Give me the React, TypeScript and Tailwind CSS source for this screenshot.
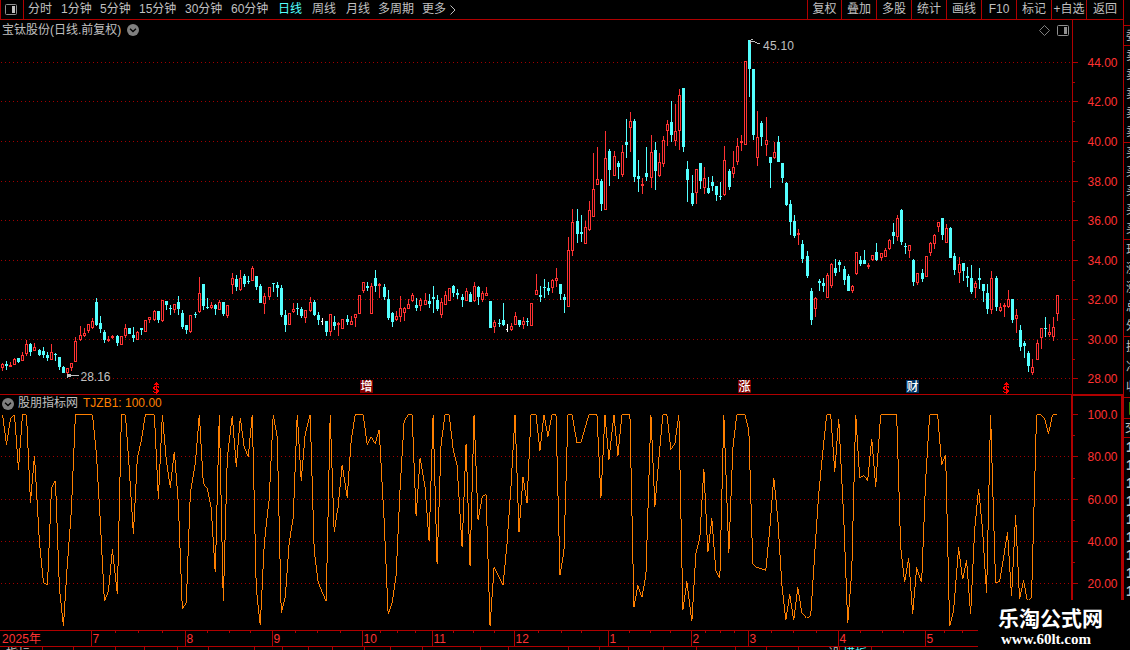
type Kind = "R" | "C" | "W";
type Candle = [Kind, number, number, number, number];

const COLORS = { R: "#ff3232", C: "#54ffff", W: "#ffffff" } as const;
const LINE = "#b00000";

// kind, high, body top, body bottom, low
const CANDLES: Candle[] = [
  ["R", 363, 364, 368, 371], ["C", 361, 364, 366, 370], ["R", 362, 365, 367, 367], ["R", 358, 359, 365, 365], ["C", 358, 358, 362, 363],
  ["R", 352, 355, 361, 361], ["R", 340, 344, 354, 356], ["C", 343, 344, 352, 356], ["R", 343, 347, 351, 351], ["C", 349, 350, 355, 356],
  ["C", 347, 351, 355, 358], ["C", 352, 355, 358, 361], ["R", 344, 352, 360, 360], ["C", 353, 354, 355, 361], ["C", 357, 357, 367, 370],
  ["C", 366, 367, 373, 373], ["R", 368, 368, 373, 375], ["R", 363, 363, 368, 371], ["R", 337, 341, 362, 362], ["R", 326, 335, 340, 341],
  ["R", 328, 333, 336, 337], ["R", 324, 324, 331, 333], ["R", 318, 321, 328, 329], ["C", 298, 302, 325, 326], ["C", 316, 323, 329, 333],
  ["C", 330, 332, 340, 343], ["R", 336, 339, 341, 342], ["R", 335, 336, 338, 339], ["C", 335, 336, 343, 346], ["R", 336, 336, 345, 345],
  ["R", 324, 328, 336, 338], ["C", 328, 328, 334, 334], ["C", 327, 335, 338, 342], ["R", 331, 332, 340, 340], ["C", 328, 328, 330, 335],
  ["R", 320, 320, 332, 332], ["R", 317, 317, 320, 323], ["R", 310, 311, 320, 321], ["C", 311, 311, 320, 323], ["R", 300, 300, 321, 322],
  ["C", 301, 301, 305, 310], ["C", 305, 308, 309, 315], ["R", 304, 304, 310, 313], ["C", 296, 302, 309, 315], ["C", 310, 313, 327, 329],
  ["C", 325, 325, 330, 334], ["R", 315, 315, 332, 333], ["C", 312, 314, 315, 318], ["R", 277, 293, 312, 313], ["C", 284, 284, 306, 310],
  ["C", 298, 307, 308, 309], ["R", 302, 305, 308, 309], ["C", 304, 305, 309, 315], ["R", 300, 302, 310, 310], ["C", 302, 302, 314, 316],
  ["R", 305, 305, 316, 318], ["R", 273, 278, 285, 294], ["C", 275, 279, 287, 291], ["R", 270, 278, 290, 291], ["C", 274, 276, 284, 287],
  ["C", 276, 281, 282, 284], ["R", 266, 268, 281, 281], ["C", 276, 276, 287, 290], ["C", 284, 286, 303, 303], ["R", 293, 296, 304, 314],
  ["R", 287, 287, 297, 300], ["C", 283, 283, 284, 292], ["C", 282, 285, 288, 297], ["C", 285, 288, 315, 317], ["C", 310, 315, 325, 332],
  ["R", 313, 313, 325, 325], ["R", 303, 309, 312, 313], ["C", 303, 308, 309, 315], ["C", 307, 309, 316, 318], ["R", 310, 310, 318, 323],
  ["R", 297, 302, 311, 312], ["C", 300, 302, 315, 316], ["C", 312, 315, 320, 325], ["W", 318, 321, 322, 325], ["C", 321, 321, 332, 336],
  ["R", 314, 314, 332, 336], ["C", 316, 322, 326, 330], ["R", 322, 323, 325, 336], ["R", 319, 319, 329, 329], ["C", 315, 319, 322, 325],
  ["R", 316, 321, 325, 325], ["R", 314, 314, 318, 327], ["R", 295, 295, 314, 314], ["R", 282, 282, 291, 293], ["C", 282, 286, 288, 291],
  ["R", 283, 286, 314, 314], ["C", 270, 278, 286, 292], ["R", 283, 284, 286, 298], ["C", 284, 287, 297, 300], ["C", 290, 299, 318, 320],
  ["C", 312, 313, 322, 327], ["R", 311, 316, 320, 321], ["R", 296, 308, 317, 322], ["R", 307, 308, 313, 321], ["R", 299, 304, 309, 309],
  ["R", 293, 295, 301, 302], ["C", 298, 305, 308, 311], ["R", 298, 300, 306, 311], ["R", 293, 300, 305, 305], ["C", 294, 301, 304, 308],
  ["C", 286, 297, 299, 313], ["C", 295, 300, 309, 311], ["R", 298, 302, 315, 318], ["R", 291, 295, 305, 305], ["R", 288, 288, 301, 301],
  ["C", 285, 286, 293, 297], ["C", 289, 293, 295, 299], ["C", 294, 297, 300, 307], ["R", 288, 291, 301, 301], ["C", 292, 294, 302, 302],
  ["R", 282, 286, 301, 302], ["C", 286, 287, 297, 305], ["R", 291, 293, 300, 302], ["R", 287, 293, 296, 296], ["C", 301, 301, 328, 328],
  ["R", 320, 322, 327, 333], ["C", 319, 323, 324, 327], ["C", 303, 320, 325, 326], ["W", 324, 329, 330, 332], ["R", 323, 326, 330, 331],
  ["R", 312, 316, 325, 325], ["C", 320, 320, 325, 327], ["R", 317, 321, 325, 329], ["C", 318, 321, 322, 326], ["R", 303, 303, 326, 326],
  ["R", 274, 290, 295, 295], ["C", 286, 295, 297, 302], ["C", 279, 287, 288, 298], ["C", 282, 288, 291, 295], ["R", 279, 280, 288, 293],
  ["R", 268, 278, 281, 287], ["C", 284, 284, 294, 300], ["C", 294, 297, 300, 313], ["R", 237, 250, 307, 307], ["R", 209, 222, 251, 256],
  ["C", 209, 221, 234, 243], ["C", 215, 232, 234, 242], ["R", 221, 227, 244, 244], ["R", 201, 210, 230, 231], ["R", 153, 189, 217, 217],
  ["R", 147, 179, 185, 185], ["C", 179, 181, 204, 211], ["R", 131, 158, 210, 210], ["C", 149, 151, 170, 186], ["R", 151, 156, 176, 176],
  ["C", 161, 163, 167, 179], ["R", 145, 152, 175, 177], ["C", 119, 142, 145, 158], ["R", 112, 121, 128, 152], ["C", 119, 121, 177, 182],
  ["C", 160, 176, 179, 192], ["R", 178, 184, 186, 194], ["C", 147, 173, 177, 181], ["R", 135, 152, 178, 188], ["C", 142, 150, 171, 190],
  ["R", 153, 162, 176, 177], ["R", 136, 140, 164, 167], ["R", 120, 124, 131, 146], ["C", 101, 122, 135, 142], ["R", 104, 131, 141, 146],
  ["R", 89, 95, 131, 150], ["C", 88, 88, 147, 152], ["C", 161, 169, 180, 202], ["C", 175, 193, 204, 206], ["R", 169, 169, 193, 204],
  ["C", 163, 163, 181, 189], ["R", 167, 178, 188, 194], ["C", 177, 188, 193, 194], ["C", 176, 182, 186, 191], ["C", 186, 186, 195, 201],
  ["C", 182, 196, 197, 200], ["R", 146, 160, 195, 196], ["C", 169, 171, 187, 190], ["R", 151, 167, 174, 178], ["R", 138, 146, 162, 165],
  ["R", 135, 141, 143, 151], ["R", 61, 61, 145, 145], ["C", 40, 40, 69, 97], ["C", 69, 69, 135, 140], ["R", 111, 137, 158, 166],
  ["C", 121, 123, 137, 146], ["R", 117, 140, 145, 156], ["C", 157, 157, 163, 188], ["R", 142, 152, 158, 159], ["C", 136, 142, 162, 162],
  ["C", 163, 163, 178, 183], ["C", 182, 183, 205, 206], ["C", 200, 204, 222, 235], ["C", 215, 221, 236, 238], ["R", 229, 233, 235, 245],
  ["C", 240, 244, 259, 263], ["C", 251, 256, 276, 278], ["C", 288, 291, 320, 325], ["R", 297, 298, 309, 317], ["C", 279, 281, 283, 291],
  ["C", 278, 283, 286, 292], ["R", 273, 275, 298, 298], ["R", 263, 264, 286, 288], ["C", 259, 268, 273, 276], ["C", 260, 262, 265, 272],
  ["C", 266, 269, 280, 285], ["C", 274, 276, 291, 291], ["R", 285, 286, 291, 293], ["R", 252, 252, 274, 275], ["C", 256, 260, 264, 266],
  ["C", 250, 260, 264, 264], ["R", 263, 265, 267, 269], ["R", 255, 255, 260, 261], ["C", 243, 252, 260, 261], ["R", 253, 253, 258, 261],
  ["R", 248, 250, 257, 257], ["R", 239, 240, 249, 250], ["C", 223, 232, 236, 244], ["R", 215, 218, 237, 241], ["C", 209, 210, 242, 245],
  ["C", 243, 246, 247, 254], ["R", 245, 245, 251, 258], ["C", 259, 260, 282, 286], ["R", 273, 273, 283, 285], ["C", 269, 273, 279, 282],
  ["R", 256, 256, 277, 277], ["R", 242, 243, 253, 256], ["R", 234, 235, 244, 249], ["R", 222, 222, 227, 232], ["C", 218, 218, 235, 240],
  ["R", 224, 228, 243, 243], ["C", 227, 228, 258, 258], ["C", 253, 256, 270, 275], ["R", 257, 264, 273, 283], ["C", 263, 263, 271, 281],
  ["C", 267, 276, 278, 287], ["C", 265, 278, 292, 294], ["R", 281, 283, 288, 298], ["C", 268, 278, 280, 289], ["C", 284, 284, 291, 302],
  ["C", 284, 293, 309, 314], ["R", 271, 278, 310, 314], ["C", 276, 278, 307, 311], ["R", 303, 307, 311, 312], ["R", 303, 305, 307, 317],
  ["R", 290, 299, 307, 308], ["C", 299, 299, 320, 323], ["R", 309, 315, 319, 333], ["C", 325, 330, 347, 351], ["C", 341, 343, 346, 358],
  ["C", 351, 353, 366, 372], ["R", 359, 367, 373, 375], ["R", 340, 343, 360, 360], ["R", 328, 328, 338, 349], ["C", 317, 328, 329, 337],
  ["R", 324, 332, 335, 337], ["R", 317, 327, 337, 341], ["R", 295, 295, 314, 321],
];

// TJZB1, one y per candle
const TJZB = [
  414, 444, 418, 414, 469, 414, 414, 502, 455, 542, 582, 585, 488, 480, 588, 626, 562, 508, 414, 414,
  414, 414, 414, 453, 523, 601, 591, 549, 594, 414, 414, 470, 534, 457, 440, 414, 414, 414, 498, 414,
  460, 487, 451, 503, 609, 602, 493, 463, 414, 483, 488, 508, 572, 414, 601, 457, 415, 466, 417, 447,
  456, 414, 588, 625, 543, 497, 414, 437, 613, 597, 542, 517, 414, 480, 433, 414, 550, 582, 592, 601,
  414, 532, 505, 464, 497, 440, 414, 414, 414, 444, 436, 443, 429, 520, 614, 602, 575, 487, 421, 414,
  414, 516, 457, 487, 541, 414, 564, 443, 414, 414, 448, 465, 547, 443, 566, 414, 520, 496, 494, 626,
  567, 577, 585, 543, 485, 414, 532, 476, 502, 414, 414, 450, 414, 436, 414, 414, 575, 550, 414, 414,
  442, 442, 428, 414, 414, 414, 497, 414, 459, 414, 455, 414, 414, 414, 607, 585, 597, 575, 414, 506,
  458, 414, 414, 449, 443, 414, 610, 581, 621, 553, 537, 468, 552, 518, 570, 578, 414, 553, 448, 414,
  414, 414, 429, 564, 567, 568, 570, 528, 477, 518, 583, 620, 594, 620, 587, 612, 618, 615, 553, 493,
  452, 414, 414, 471, 418, 517, 623, 572, 414, 477, 475, 480, 438, 486, 414, 414, 414, 414, 414, 547,
  582, 558, 614, 567, 582, 480, 414, 414, 414, 464, 454, 626, 610, 547, 579, 560, 614, 530, 488, 530,
  593, 414, 583, 581, 557, 532, 596, 515, 599, 580, 602, 597, 414, 414, 418, 433, 414, 414,
];

const PRICE_TICKS: [string, number][] = [
  ["44.00", 62], ["42.00", 101], ["40.00", 141], ["38.00", 181], ["36.00", 220],
  ["34.00", 260], ["32.00", 299], ["30.00", 339], ["28.00", 378],
];
const PRICE_MINOR = [82, 121, 161, 201, 240, 280, 319, 359];
const IND_TICKS: [string, number][] = [["100.0", 414], ["80.00", 456], ["60.00", 499], ["40.00", 541], ["20.00", 583]];
const IND_MINOR = [435, 478, 520, 562];

const PERIODS = [
  { label: "分时", w: "w-[33px]" },
  { label: "1分钟", w: "w-[39px]" },
  { label: "5分钟", w: "w-[39px]" },
  { label: "15分钟", w: "w-[46px]" },
  { label: "30分钟", w: "w-[46px]" },
  { label: "60分钟", w: "w-[47px]" },
  { label: "日线", w: "w-[34px]", active: true },
  { label: "周线", w: "w-[34px]" },
  { label: "月线", w: "w-[32px]" },
  { label: "多周期", w: "w-[44px]" },
  { label: "更多", w: "w-[27px]" },
];

const ACTIONS = [
  { label: "复权", w: "w-[34px]" },
  { label: "叠加", w: "w-[35px]" },
  { label: "多股", w: "w-[35px]" },
  { label: "统计", w: "w-[35px]" },
  { label: "画线", w: "w-[35px]" },
  { label: "F10", w: "w-[35px]" },
  { label: "标记", w: "w-[35px]" },
  { label: "+自选", w: "w-[35px]" },
  { label: "返回", w: "w-[37px]" },
];

const MONTHS: [string, number][] = [
  ["7", 91], ["8", 185], ["9", 272], ["10", 362], ["11", 432], ["12", 514],
  ["1", 608], ["2", 691], ["3", 748], ["4", 838], ["5", 925],
];
const WEEK_TICKS = [
  115, 138, 162, 207, 229, 250, 295, 317, 340, 380, 397, 415, 453, 473, 494, 538, 561, 581,
  629, 650, 670, 705, 720, 734, 771, 793, 816, 860, 882, 903, 944, 962,
];
const FOOT_TICKS = [42, 73, 115, 144, 177, 208, 254, 282, 308, 332, 364, 390, 422, 480, 508, 568, 599, 628, 663, 696, 735, 766, 798, 839, 871];

const QUOTES = [
  { h: "h-5", rows: ["委"] },
  { h: "h-[97px]", rows: ["卖", "卖", "卖", "卖", "卖"] },
  { h: "h-[97px]", rows: ["买", "买", "买", "买", "买"] },
  { h: "h-[97px]", rows: ["现", "涨", "涨", "总", "外"] },
  { h: "h-[61px]", rows: ["换", "净", "收"] },
];

const xAt = (i: number) => Math.floor(2.04 + 4.1074 * i);

// one dot every 4px
const DOTS = Array.from({ length: 268 }, () => "h1v1h-1zm4 0").join("");

function GridRow({ y }: { y: number }) {
  return <path d={`M1 ${y}${DOTS}`} fill="#a00000" />;
}

function CandleMark({ x, c }: { x: number; c: Candle }) {
  const [kind, high, top, bottom, low] = c;
  const fill = COLORS[kind];
  return (
    <g fill={fill}>
      {kind === "R" ? (
        <>
          <rect x={x} y={high} width={1} height={top - high} />
          <rect x={x} y={bottom} width={1} height={low - bottom} />
          <rect x={x - 1} y={top} width={3} height={bottom - top} />
          {bottom - top > 2 && <rect x={x} y={top + 1} width={1} height={bottom - top - 2} fill="#000" />}
        </>
      ) : (
        <>
          <rect x={x} y={high} width={1} height={low - high} />
          <rect x={x - 1} y={top} width={kind === "W" ? 2 : 3} height={bottom - top} />
        </>
      )}
    </g>
  );
}

function DividendMark({ x }: { x: number }) {
  return (
    <g fill="#ff0000">
      <path d={`M${x} 382h1v1h1v1h1v1h-5v-1h1v-1h1z`} />
      <path d={`M${x} 385h1v9h-1zM${x - 2} 386h5v1h-5zM${x - 3} 387h2v2h-2zM${x + 2} 387h1v1h-1zM${x - 2} 389h4v1h-4zM${x + 1} 390h2v2h-2zM${x - 3} 391h1v1h-1zM${x - 2} 392h4v1h-4z`} />
    </g>
  );
}

function EventMark({ x, label, fill }: { x: number; label: string; fill: string }) {
  return (
    <g>
      <rect x={x} y={380} width={13} height={13} fill={fill} />
      <text x={x + 0.5} y={391} fontSize={12} fontWeight={500} fill="#fff">{label}</text>
    </g>
  );
}

function PriceChart() {
  return (
    <svg width={1072} height={374} viewBox="0 20 1072 374" shapeRendering="crispEdges" className="block">
      {PRICE_TICKS.map(([, y]) => <GridRow key={y} y={y} />)}
      {CANDLES.map((c, i) => <CandleMark key={i} x={xAt(i)} c={c} />)}
      <g fill="none" stroke="#c0c0c0">
        <path d="M67 375.5H79M67.5 374V378M68.5 374V377M69 374.5H71M69 376.5H71" />
        <path d="M750 41.5H755M755 42.5H757M757 43.5H760M750.5 40V44M751 39.5H753" />
      </g>
      <g fontSize={12} fill="#c0c0c0">
        <text x={80.5} y={381} textLength={30}>28.16</text>
        <text x={763} y={50} textLength={31}>45.10</text>
      </g>
      <DividendMark x={156} />
      <DividendMark x={1006} />
      <EventMark x={360} label="增" fill="#800000" />
      <EventMark x={738} label="涨" fill="#800000" />
      <EventMark x={906} label="财" fill="#003264" />
    </svg>
  );
}

function Axis({ top, height, ticks, minor }: { top: number; height: number; ticks: [string, number][]; minor: number[] }) {
  return (
    <svg width={49} height={height} viewBox={`1073 ${top} 49 ${height}`} shapeRendering="crispEdges" className="block">
      {ticks.map(([label, y]) => (
        <g key={label}>
          <rect x={1073} y={y} width={5} height={1} fill={LINE} />
          <text x={1087.5} y={y + 5} fontSize={12} fill="#ff3232" textLength={30}>{label}</text>
        </g>
      ))}
      {minor.map((y) => <rect key={y} x={1073} y={y} width={2} height={1} fill={LINE} />)}
    </svg>
  );
}

function IndicatorChart() {
  const points = TJZB.map((y, i) => `${xAt(i) + 0.5},${y + 0.5}`).join(" ");
  return (
    <svg width={1072} height={235} viewBox="0 395 1072 235" shapeRendering="crispEdges" className="block">
      {IND_TICKS.slice(1).map(([, y]) => <GridRow key={y} y={y} />)}
      <polyline points={points} fill="none" stroke="#ff8000" />
    </svg>
  );
}

function TimeAxis() {
  return (
    <svg width={1123} height={20} viewBox="0 630 1123 20" shapeRendering="crispEdges" className="block">
      <g fill={LINE}>
        <rect x={0} y={630} width={1123} height={1} />
        <rect x={0} y={646} width={1123} height={1} />
        {MONTHS.map(([, x]) => <rect key={x} x={x} y={630} width={1} height={16} />)}
        {WEEK_TICKS.map((x) => <rect key={x} x={x} y={631} width={1} height={2} />)}
        {FOOT_TICKS.map((x) => <rect key={x} x={x} y={647} width={1} height={3} />)}
      </g>
      <g fontSize={12} fill="#ff3232">
        <text x={2} y={643} textLength={39}>2025年</text>
        {MONTHS.map(([label, x]) => <text key={x} x={x + 1.5} y={643}>{label}</text>)}
      </g>
      <g fontSize={12} fill="#c0c0c0">
        <text x={6} y={658}>指标</text>
        <text x={828} y={658}>设</text>
        <text x={843} y={658} fill="#54ffff">模板</text>
      </g>
    </svg>
  );
}

function ChevronDot() {
  return (
    <svg width={12} height={12} viewBox="0 0 12 12" className="block shrink-0">
      <circle cx={6} cy={6} r={6} fill="#808080" />
      <path d="M3 4.7 6 7.5 9 4.7" fill="none" stroke="#000" strokeWidth={1.3} />
    </svg>
  );
}

function PanelIcon({ fill = "#c0c0c0" }: { fill?: string }) {
  return (
    <svg width={12} height={11} viewBox="0 0 12 11" className="block shrink-0">
      <rect x={0.5} y={0.5} width={11} height={10} rx={1} fill="none" stroke="#909090" />
      <rect x={7} y={2} width={3} height={7} fill={fill} />
    </svg>
  );
}

function Toolbar() {
  return (
    <header className="flex h-5 border-b border-[#b00000] leading-[19px]">
      <div className="flex w-6 items-center border-x border-[#b00000] pl-1 pb-px">
        <PanelIcon />
      </div>
      <nav className="flex flex-1 items-center pl-1">
        {PERIODS.map((p) => (
          <span key={p.label} className={`${p.w} whitespace-nowrap ${p.active ? "text-[#54ffff]" : ""}`}>{p.label}</span>
        ))}
        <svg width={8} height={10} viewBox="0 0 8 10" className="block">
          <path d="M1.5 .5 6 5 1.5 9.5" fill="none" stroke="#c0c0c0" />
        </svg>
      </nav>
      {ACTIONS.map((a) => (
        <span key={a.label} className={`${a.w} flex justify-center whitespace-nowrap border-l border-[#b00000]`}>{a.label}</span>
      ))}
    </header>
  );
}

function QuoteStrip() {
  return (
    <aside className="flex h-[650px] w-[7px] flex-col overflow-hidden border-l border-[#b00000] pt-[25px]">
      {QUOTES.map((q, i) => (
        <div key={i} className={`${q.h} flex shrink-0 flex-col justify-around border-t border-[#b00000] pl-0.5 leading-3`}>
          {q.rows.map((r, j) => <span key={j} className="block w-3">{r}</span>)}
        </div>
      ))}
      <div className="h-[21px] shrink-0 border-t border-[#b00000] pl-[3px] text-sm leading-5 text-[#c8c800]">
        <span className="block w-4">日</span>
      </div>
      <div className="h-[19px] shrink-0 border-t border-[#b00000] pl-px leading-[18px]">
        <span className="block w-3">交</span>
      </div>
      <div className="shrink-0 border-t border-[#b00000] pl-0.5 text-sm leading-[18px] font-bold">
        {Array.from({ length: 9 }, (_, i) => <span key={i} className="block">1</span>)}
      </div>
    </aside>
  );
}

export default function App() {
  return (
    <div className="relative flex h-[650px] w-[1130px] overflow-hidden bg-black font-['Liberation_Sans','Noto_Sans_CJK_SC',sans-serif] text-[12px] text-[#c0c0c0]">
      <main className="flex w-[1123px] shrink-0 flex-col">
        <Toolbar />
        <section className="relative flex h-[375px] border-b border-[#b00000]">
          <PriceChart />
          <div className="border-l border-[#b00000]">
            <Axis top={20} height={374} ticks={PRICE_TICKS} minor={PRICE_MINOR} />
          </div>
          <div className="absolute top-0 left-0 flex w-[1072px] items-center pt-px pr-[3px] pl-[2px] leading-[18px]">
            <span className="mr-[6px] whitespace-nowrap">宝钛股份(日线.前复权)</span>
            <ChevronDot />
            <svg width={11} height={11} viewBox="0 0 11 11" className="mr-[7px] ml-auto block">
              <path d="M5.5 .5 10.5 5.5 5.5 10.5 .5 5.5z" fill="none" stroke="#808080" />
            </svg>
            <PanelIcon fill="#909090" />
          </div>
        </section>
        <section className="relative flex h-[235px]">
          <IndicatorChart />
          <div className="-mt-px h-[236px] w-[52px] shrink-0 border-2 border-b-0 border-[#b00000]">
            <Axis top={396} height={234} ticks={IND_TICKS} minor={IND_MINOR} />
          </div>
          <div className="absolute top-0 left-0 flex items-center pl-[2px] leading-[17px]">
            <ChevronDot />
            <span className="mr-[5px] ml-1 whitespace-nowrap">股朋指标网</span>
            <span className="whitespace-nowrap text-[#ff8000]">TJZB1: 100.00</span>
          </div>
        </section>
        <TimeAxis />
      </main>
      <QuoteStrip />
      {/* site mark over the lower right corner */}
      <div className="absolute right-0 bottom-0 h-[50px] w-[152px] bg-black pt-1.5 pl-5 text-white">
        <div className="text-[21px] leading-[26px] font-bold whitespace-nowrap">乐淘公式网</div>
        <div className="pl-[3px] font-['Liberation_Serif',serif] text-[15px] leading-[14px] font-bold">www.60lt.com</div>
      </div>
    </div>
  );
}
